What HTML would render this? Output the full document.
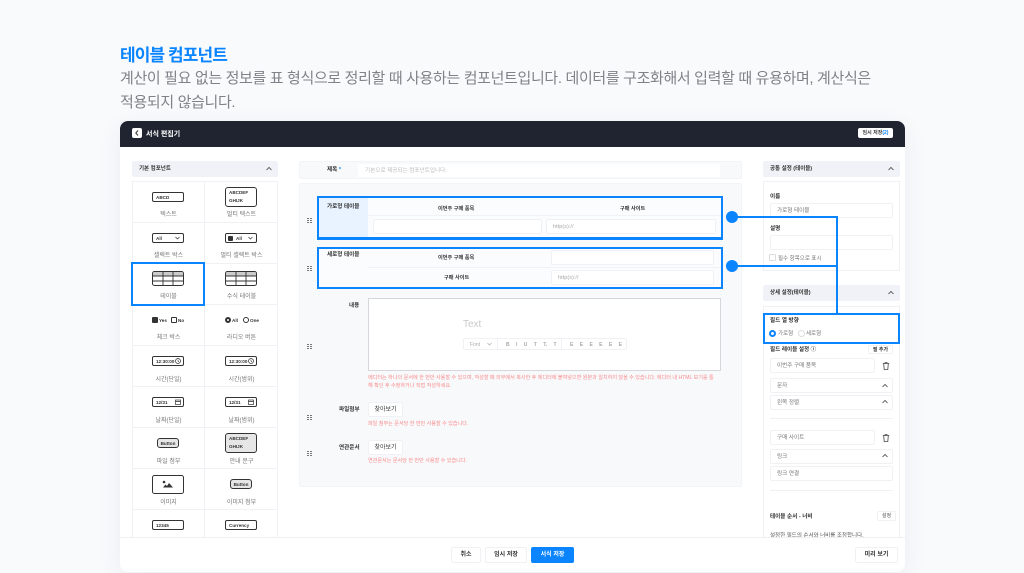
<!DOCTYPE html>
<html lang="ko"><head><meta charset="utf-8"><title>테이블 컴포넌트</title>
<style>
*{box-sizing:border-box;margin:0;padding:0}
html,body{width:1024px;height:573px;overflow:hidden}
body{position:relative;background:#f9fafc;font-family:"Liberation Sans","Noto Sans CJK KR",sans-serif;color:#333}
.a,.t,.c,.ic,.in,.hd,.h,.l,.r{position:absolute}
.t{white-space:nowrap;line-height:1;margin-top:1.5px}
h1{position:absolute;left:120px;top:46px;font-size:17px;line-height:20px;font-weight:700;color:#0a84ff;letter-spacing:-.9px;white-space:nowrap}
p.s{position:absolute;left:120px;font-size:15px;line-height:23px;letter-spacing:-.35px;color:#7f8287;white-space:nowrap;font-weight:400}
#card{position:absolute;left:120px;top:121px;width:785px;height:451px;background:#fff;border-radius:8px;box-shadow:0 6px 24px rgba(40,50,80,.07)}
#top{position:absolute;left:120px;top:121px;width:785px;height:26px;background:#1f2430;border-radius:8px 8px 0 0}
.hd{background:#f1f2f7;height:16px;border-radius:2px;font-size:5.500px;font-weight:700;color:#333;line-height:17px;padding-left:7px}
.hd svg{position:absolute;right:6px;top:5px}
.c{width:73px;font-size:6px;color:#777;text-align:center;line-height:8px;margin-top:2px}
.ic{border:1px solid #333;border-radius:2px;height:10px;width:32px;background:#fff;font-size:4.600px;font-weight:700;line-height:9px;padding-left:3px;color:#333;white-space:nowrap}
.in{background:#fff;border:1px solid #f0f1f4;border-radius:2px;font-size:5.600px;line-height:14px;padding-left:6px;color:#777;white-space:nowrap}
.b{font-weight:700;color:#333}
.red{color:#f78c8c;font-size:5.100px}
.lb{font-size:5.600px;font-weight:700;color:#333}
.blue{position:absolute;border:2px solid #0a84ff}
.h{width:5px;height:5px;background:linear-gradient(90deg,transparent 2px,#f8f9fb 2px,#f8f9fb 3px,transparent 3px),repeating-linear-gradient(#777 0 1px,transparent 1px 2px);left:307px}
.tb{font-size:5px;color:#aaa}
.sm{font-size:5.500px;color:#777}
.btn{font-size:6px;padding:0;text-align:center;line-height:15px;color:#333}
</style></head><body>
<h1>테이블 컴포넌트</h1>
<p class="s" style="top:67px">계산이 필요 없는 정보를 표 형식으로 정리할 때 사용하는 컴포넌트입니다. 데이터를 구조화해서 입력할 때 유용하며, 계산식은</p>
<p class="s" style="top:91px">적용되지 않습니다.</p>
<div id="card"></div><div id="top"></div>
<div class="a" style="left:132px;top:128px;width:10px;height:10px;background:#fff;border-radius:2px"><svg width="10" height="10" style="display:block"><path d="M6 2.500 3.800 5 6 7.500" fill="none" stroke="#333" stroke-width="1"/></svg></div>
<div class="t" style="left:146px;top:129px;font-size:7px;font-weight:700;color:#fff">서식 편집기</div>
<div class="a" style="left:858px;top:128px;width:35px;height:10px;background:#fff;border-radius:2px;font-size:5px;font-weight:700;text-align:center;line-height:11px;color:#333;white-space:nowrap">임시 저장<span style="color:#0a84ff">(2)</span></div>

<!-- left panel -->
<div class="hd" style="left:132px;top:161px;width:146px">기본 컴포넌트<svg width="6" height="6"><path d="M.5 4 3 1.500 5.500 4" fill="none" stroke="#444" stroke-width=".8"/></svg></div>
<div class="a" style="left:132px;top:181px;width:146px;height:356px;border:1px solid #f0f1f4;border-bottom:0"></div>
<div class="a" style="left:204px;top:181px;width:1px;height:356px;background:#f0f1f4"></div>
<div class="a" style="left:132px;top:222px;width:146px;height:1px;background:#f0f1f4"></div>
<div class="a" style="left:132px;top:263px;width:146px;height:1px;background:#f0f1f4"></div>
<div class="a" style="left:132px;top:304px;width:146px;height:1px;background:#f0f1f4"></div>
<div class="a" style="left:132px;top:345px;width:146px;height:1px;background:#f0f1f4"></div>
<div class="a" style="left:132px;top:386px;width:146px;height:1px;background:#f0f1f4"></div>
<div class="a" style="left:132px;top:427px;width:146px;height:1px;background:#f0f1f4"></div>
<div class="a" style="left:132px;top:468px;width:146px;height:1px;background:#f0f1f4"></div>
<div class="a" style="left:132px;top:509px;width:146px;height:1px;background:#f0f1f4"></div>

<div class="ic" style="left:152px;top:192px">ABCD</div>
<div class="c" style="left:132px;top:209px">텍스트</div>
<div class="ic" style="left:225px;top:187px;height:20px;line-height:8px;padding-top:1px;white-space:normal;border-radius:3px">ABCDEF GHIJK</div>
<div class="c" style="left:205px;top:209px">멀티 텍스트</div>

<div class="ic" style="left:152px;top:233px">All<svg class="a" style="right:3px;top:2px" width="5" height="4"><path d="M.5 1 2.500 3 4.500 1" fill="none" stroke="#333" stroke-width=".7"/></svg></div>
<div class="c" style="left:132px;top:250px">셀렉트 박스</div>
<div class="ic" style="left:225px;top:233px;padding-left:10px">All<span class="a" style="left:1.500px;top:1.500px;width:5px;height:5px;background:#333;border-radius:1px"></span><svg class="a" style="right:3px;top:2px" width="5" height="4"><path d="M.5 1 2.500 3 4.500 1" fill="none" stroke="#333" stroke-width=".7"/></svg></div>
<div class="c" style="left:205px;top:250px">멀티 셀렉트 박스</div>

<svg class="a" style="left:152px;top:271px" width="32" height="15"><rect x=".5" y=".5" width="31" height="14" rx="2" fill="#fff" stroke="#333"/><path d="M1 5V2.500Q1 1 2.500 1h27Q31 1 31 2.500V5z" fill="#ccc"/><path d="M.5 5h31M.5 10h31M11 .5v14M21 .5v14" stroke="#333" stroke-width=".9"/></svg>
<div class="c" style="left:132px;top:291px">테이블</div>
<svg class="a" style="left:225px;top:271px" width="32" height="15"><rect x=".5" y=".5" width="31" height="14" rx="2" fill="#fff" stroke="#333"/><path d="M1 5V2.500Q1 1 2.500 1h27Q31 1 31 2.500V5z" fill="#ccc"/><path d="M.5 5h31M.5 10h31M11 .5v14M21 .5v14" stroke="#333" stroke-width=".9"/></svg>
<div class="c" style="left:205px;top:291px">수식 테이블</div>
<div class="blue" style="left:131px;top:262px;width:74px;height:44px"></div>

<div class="a" style="left:152px;top:317px;width:6px;height:6px;background:#333;border-radius:1px"></div>
<div class="t b" style="left:159px;top:317px;font-size:4.600px">Yes</div>
<div class="a" style="left:171px;top:317px;width:6px;height:6px;border:1px solid #333;border-radius:1px"></div>
<div class="t b" style="left:178px;top:317px;font-size:4.600px">No</div>
<div class="c" style="left:132px;top:332px">체크 박스</div>
<div class="a" style="left:225px;top:317px;width:6px;height:6px;border:2px solid #333;border-radius:50%"></div>
<div class="t b" style="left:232px;top:317px;font-size:4.600px">All</div>
<div class="a" style="left:243px;top:317px;width:6px;height:6px;border:1px solid #333;border-radius:50%"></div>
<div class="t b" style="left:250px;top:317px;font-size:4.600px">One</div>
<div class="c" style="left:205px;top:332px">라디오 버튼</div>

<div class="ic" style="left:152px;top:356px">12:30:00<svg class="a" style="right:2px;top:1px" width="6" height="6"><circle cx="3" cy="3" r="2.500" fill="none" stroke="#333" stroke-width=".7"/><path d="M3 1.500V3l1 1" fill="none" stroke="#333" stroke-width=".6"/></svg></div>
<div class="c" style="left:132px;top:374px">시간(단일)</div>
<div class="ic" style="left:225px;top:356px">12:30:00<svg class="a" style="right:2px;top:1px" width="6" height="6"><circle cx="3" cy="3" r="2.500" fill="none" stroke="#333" stroke-width=".7"/><path d="M3 1.500V3l1 1" fill="none" stroke="#333" stroke-width=".6"/></svg></div>
<div class="c" style="left:205px;top:374px">시간(범위)</div>

<div class="ic" style="left:152px;top:397px">12/31<svg class="a" style="right:2px;top:1px" width="6" height="6"><rect x=".5" y="1" width="5" height="4.500" fill="none" stroke="#333" stroke-width=".7"/><path d="M.5 2.500h5" stroke="#333" stroke-width=".8"/></svg></div>
<div class="c" style="left:132px;top:415px">날짜(단일)</div>
<div class="ic" style="left:225px;top:397px">12/31<svg class="a" style="right:2px;top:1px" width="6" height="6"><rect x=".5" y="1" width="5" height="4.500" fill="none" stroke="#333" stroke-width=".7"/><path d="M.5 2.500h5" stroke="#333" stroke-width=".8"/></svg></div>
<div class="c" style="left:205px;top:415px">날짜(범위)</div>

<div class="ic" style="left:157px;top:438px;width:22px;background:#e6e6e6;padding:0;text-align:center;border-radius:3px">Button</div>
<div class="c" style="left:132px;top:456px">파일 첨부</div>
<div class="ic" style="left:225px;top:433px;height:20px;line-height:8px;background:#e6e6e6;padding-top:1px;white-space:normal;border-radius:3px">ABCDEF GHIJK</div>
<div class="c" style="left:205px;top:456px">안내 문구</div>

<svg class="a" style="left:152px;top:475px" width="32" height="19"><rect x=".5" y=".5" width="31" height="18" rx="2" fill="#fff" stroke="#333"/><circle cx="12" cy="7" r="1.300" fill="#333"/><path d="M11 12.500l2.500-3 1.500 1.500 2-3 4 4.500z" fill="#333"/></svg>
<div class="c" style="left:132px;top:497px">이미지</div>
<div class="ic" style="left:230px;top:479px;width:22px;background:#e6e6e6;padding:0;text-align:center;border-radius:3px">Button</div>
<div class="c" style="left:205px;top:497px">이미지 첨부</div>

<div class="ic" style="left:152px;top:520px">12345</div>
<div class="ic" style="left:225px;top:520px">Currency</div>

<!-- main -->
<div class="a" style="left:299px;top:161px;width:443px;height:18px;background:#f8f9fb;border:1px solid #f3f4f7;border-radius:2px"></div>
<div class="t lb" style="left:327px;top:166px">제목 <span style="color:#0a84ff">*</span></div>
<div class="a" style="left:358px;top:164px;width:362px;height:13px;background:#fff"></div>
<div class="t" style="left:365px;top:167px;font-size:5.600px;color:#bbb">기본으로 제공되는 컴포넌트입니다.</div>
<div class="a" style="left:299px;top:183px;width:443px;height:304px;background:#f8f9fb;border:1px solid #f3f4f7;border-radius:2px"></div>

<div class="a" style="left:319px;top:198px;width:49px;height:41px;background:#e8f3ff"></div>
<div class="a" style="left:368px;top:198px;width:353px;height:41px;background:#fbfcfd"></div>
<div class="a" style="left:368px;top:215px;width:353px;height:1px;background:#f1f2f5"></div>
<div class="t lb" style="left:327px;top:203px">가로형 테이블</div>
<div class="t lb" style="left:438px;top:205px;font-size:5.200px">이번주 구매 품목</div>
<div class="t lb" style="left:620px;top:205px;font-size:5.200px">구매 사이트</div>
<div class="in" style="left:373px;top:219px;width:169px;height:15px"></div>
<div class="in" style="left:546px;top:219px;width:170px;height:15px;color:#aaa">http(s)://</div>
<div class="blue" style="left:317px;top:196px;width:406px;height:44px;border-bottom-width:3px"></div>

<div class="a" style="left:319px;top:249px;width:402px;height:38px;background:#fbfcfd"></div>
<div class="a" style="left:368px;top:267px;width:353px;height:1px;background:#f1f2f5"></div>
<div class="t lb" style="left:327px;top:251px">세로형 테이블</div>
<div class="t lb" style="left:438px;top:254px;font-size:5.200px">이번주 구매 품목</div>
<div class="t lb" style="left:444px;top:274px;font-size:5.200px">구매 사이트</div>
<div class="in" style="left:551px;top:250px;width:163px;height:15px"></div>
<div class="in" style="left:551px;top:270px;width:163px;height:15px;color:#aaa">http(s)://</div>
<div class="blue" style="left:317px;top:247px;width:406px;height:42px"></div>

<div class="h" style="top:218px"></div><div class="h" style="top:266px"></div><div class="h" style="top:344px"></div><div class="h" style="top:415px"></div><div class="h" style="top:451px"></div>

<div class="t lb" style="left:349px;top:302px">내용</div>
<div class="a" style="left:368px;top:298px;width:353px;height:73px;background:#fff;border:1px solid #d5d7dc"></div>
<div class="t" style="left:463px;top:318px;font-size:10px;color:#c9c9c9">Text</div>
<div class="a" style="left:463px;top:338px;width:164px;height:12px;border:1px solid #f0f1f4;border-radius:2px;background:#fff"></div>
<div class="a" style="left:497px;top:338px;width:1px;height:12px;background:#f0f1f4"></div>
<div class="a" style="left:561px;top:338px;width:1px;height:12px;background:#f0f1f4"></div>
<div class="t tb" style="left:470px;top:341px">Font</div>
<svg class="a" style="left:487px;top:342px" width="5" height="4"><path d="M.5 1 2.500 3 4.500 1" fill="none" stroke="#aaa" stroke-width=".7"/></svg>
<div class="t tb" style="left:506px;top:341px;word-spacing:5px;font-weight:700">B I U T T. T</div>
<div class="t tb" style="left:570px;top:341px;word-spacing:5px;font-weight:700">E E E E E E</div>
<div class="t red" style="left:368px;top:374px">에디터는 하나의 문서에 한 번만 사용할 수 있으며, 작성할 때 외부에서 복사한 후 에디터에 붙여넣으면 원본과 일치하지 않을 수 있습니다. 에디터 내 HTML 보기를 통</div>
<div class="t red" style="left:368px;top:382px">해 확인 후 수정하거나 직접 작성하세요.</div>

<div class="t lb" style="left:339px;top:406px">파일첨부</div>
<div class="in btn" style="left:368px;top:402px;width:35px;height:15px">찾아보기</div>
<div class="t red" style="left:368px;top:420px">파일 첨부는 문서당 한 번만 사용할 수 있습니다.</div>
<div class="t lb" style="left:339px;top:444px">연관문서</div>
<div class="in btn" style="left:368px;top:440px;width:35px;height:15px">찾아보기</div>
<div class="t red" style="left:368px;top:457px">연관문서는 문서당 한 번만 사용할 수 있습니다.</div>

<!-- right panel -->
<div class="hd" style="left:763px;top:161px;width:137px">공통 설정 (테이블)<svg width="6" height="6"><path d="M.5 4 3 1.500 5.500 4" fill="none" stroke="#444" stroke-width=".8"/></svg></div>
<div class="a" style="left:763px;top:181px;width:137px;height:90px;border:1px solid #f0f1f4"></div>
<div class="t lb" style="left:770px;top:193px">이름</div>
<div class="in" style="left:770px;top:203px;width:123px;height:15px">가로형 테이블</div>
<div class="t lb" style="left:770px;top:225px">설명</div>
<div class="in" style="left:770px;top:235px;width:123px;height:15px"></div>
<div class="a" style="left:769px;top:254px;width:7px;height:7px;border:1px solid #ddd;border-radius:1px;background:#fff"></div>
<div class="t sm" style="left:778px;top:255px">필수 항목으로 표시</div>

<div class="hd" style="left:763px;top:285px;width:137px">상세 설정(테이블)<svg width="6" height="6"><path d="M.5 4 3 1.500 5.500 4" fill="none" stroke="#444" stroke-width=".8"/></svg></div>
<div class="a" style="left:763px;top:306px;width:137px;height:232px;border:1px solid #f0f1f4"></div>
<div class="t lb" style="left:770px;top:317px">필드 열 방향</div>
<div class="a" style="left:769px;top:330px;width:7px;height:7px;border-radius:50%;background:#fff;border:2px solid #0a84ff"></div>
<div class="t sm" style="left:778px;top:330px">가로형</div>
<div class="a" style="left:798px;top:330px;width:7px;height:7px;border-radius:50%;background:#fff;border:1px solid #ddd"></div>
<div class="t sm" style="left:806px;top:330px">세로형</div>
<div class="t lb" style="left:770px;top:346px">필드 레이블 설정 ⓘ</div>
<div class="in" style="left:868px;top:345px;width:25px;height:9px;padding:0;text-align:center;line-height:8px;font-size:5px;font-weight:700;color:#333">필 추가</div>
<div class="in" style="left:770px;top:358px;width:105px;height:15px">이번주 구매 품목</div>
<svg class="a" style="left:882px;top:362px" width="8" height="8"><path d="M.8 1.500h6.400M3 1.500V.6h2v.9M1.700 1.500l.5 6h3.600l.5-6" fill="none" stroke="#444" stroke-width=".8"/></svg>
<div class="in" style="left:770px;top:378px;width:123px;height:15px">문자</div>
<svg class="a" style="left:882px;top:383px" width="6" height="6"><path d="M.5 4 3 1.500 5.500 4" fill="none" stroke="#444" stroke-width=".8"/></svg>
<div class="in" style="left:770px;top:395px;width:123px;height:15px">왼쪽 정렬</div>
<svg class="a" style="left:882px;top:399px" width="6" height="6"><path d="M.5 4 3 1.500 5.500 4" fill="none" stroke="#444" stroke-width=".8"/></svg>
<div class="a" style="left:770px;top:418px;width:123px;height:1px;background:#f0f1f4"></div>
<div class="in" style="left:770px;top:430px;width:105px;height:15px">구매 사이트</div>
<svg class="a" style="left:882px;top:434px" width="8" height="8"><path d="M.8 1.500h6.400M3 1.500V.6h2v.9M1.700 1.500l.5 6h3.600l.5-6" fill="none" stroke="#444" stroke-width=".8"/></svg>
<div class="in" style="left:770px;top:449px;width:123px;height:15px">링크</div>
<svg class="a" style="left:882px;top:453px" width="6" height="6"><path d="M.5 4 3 1.500 5.500 4" fill="none" stroke="#444" stroke-width=".8"/></svg>
<div class="in" style="left:770px;top:466px;width:123px;height:15px">링크 연결</div>
<div class="a" style="left:770px;top:490px;width:123px;height:1px;background:#f0f1f4"></div>
<div class="t lb" style="left:770px;top:513px">테이블 순서 - 너비</div>
<div class="in" style="left:877px;top:511px;width:19px;height:10px;padding:0;text-align:center;line-height:9px;font-size:5px;color:#555">설정</div>
<div class="t sm" style="left:770px;top:532px;color:#555">설정한 필드의 순서와 너비를 조정합니다.</div>

<!-- connectors -->
<div class="a" style="left:732px;top:216px;width:106px;height:2px;background:#0a84ff"></div>
<div class="a" style="left:732px;top:265px;width:106px;height:2px;background:#0a84ff"></div>
<div class="a" style="left:836px;top:216px;width:2px;height:98px;background:#0a84ff"></div>
<div class="a" style="left:726px;top:211px;width:12px;height:12px;border-radius:50%;background:#0a84ff"></div>
<div class="a" style="left:726px;top:260px;width:12px;height:12px;border-radius:50%;background:#0a84ff"></div>
<div class="blue" style="left:763px;top:313px;width:137px;height:31px"></div>

<!-- footer -->
<div class="a" style="left:120px;top:537px;width:785px;height:35px;background:#fff;border-top:1px solid #eeeff2;border-radius:0 0 8px 8px"></div>
<div class="in btn" style="left:451px;top:547px;width:30px;height:16px;font-weight:700">취소</div>
<div class="in btn" style="left:485px;top:547px;width:42px;height:16px;font-weight:700">임시 저장</div>
<div class="a" style="left:531px;top:547px;width:43px;height:16px;background:#0a84ff;border-radius:2px;text-align:center;line-height:17px;color:#fff;font-size:6px;font-weight:700">서식 저장</div>
<div class="in btn" style="left:855px;top:547px;width:43px;height:16px;font-weight:700">미리 보기</div>
</body></html>
